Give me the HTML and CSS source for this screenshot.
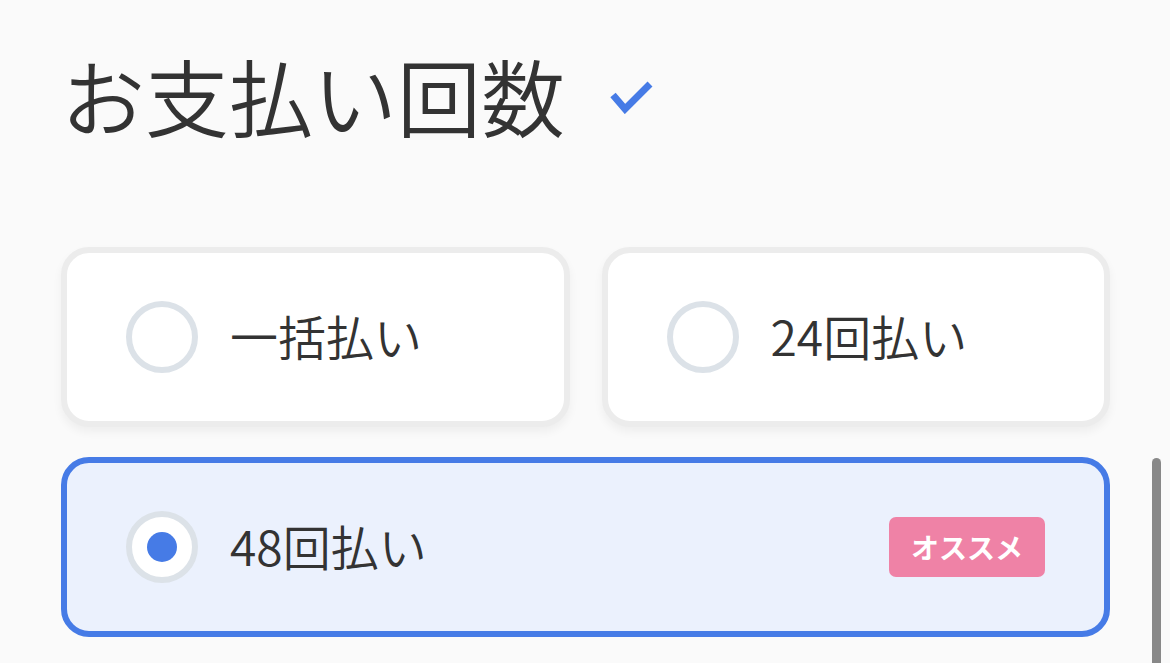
FILE: index.html
```html
<!DOCTYPE html>
<html lang="ja">
<head>
<meta charset="utf-8">
<link rel="stylesheet" href="styles.css">
</head>
<body>
<div class="page">
  <div class="title-row">
    <h1 class="title">お支払い回数</h1>
    <svg class="check" width="48" height="34" viewBox="0 0 48 34">
      <polyline points="4,11 16,25 41,0" fill="none" stroke="#467be6" stroke-width="7" stroke-linejoin="miter" stroke-miterlimit="10" transform="translate(0,4)"/>
    </svg>
  </div>
  <div class="options">
    <label class="card">
      <span class="radio"></span>
      <span class="label">一括払い</span>
    </label>
    <label class="card">
      <span class="radio"></span>
      <span class="label">24回払い</span>
    </label>
    <label class="card card-wide card-selected">
      <span class="radio radio-on"><span class="dot"></span></span>
      <span class="label">48回払い</span>
      <span class="badge">オススメ</span>
    </label>
  </div>
</div>
<div class="scrollbar"></div>
</body>
</html>
```

FILE: styles.css
```css
html, body {
  margin: 0;
  padding: 0;
  background: #fafafa;
  height: 100%;
  overflow: hidden;
}
body {
  font-family: "Noto Sans CJK JP", "Noto Sans", sans-serif;
  color: #333333;
}
.page {
  padding: 53px 60px 0 61px;
}
.title-row {
  display: flex;
  align-items: center;
  gap: 44px;
  height: 84px;
}
.title {
  margin: 0;
  font-size: 84px;
  line-height: 84px;
  font-weight: 350;
  color: #333333;
  letter-spacing: 0;
}
.check {
  display: block;
  margin-top: 4px;
}
.options {
  margin-top: 110px;
  display: grid;
  grid-template-columns: 1fr 1fr;
  column-gap: 32px;
  row-gap: 30px;
}
.card {
  box-sizing: border-box;
  height: 180px;
  display: flex;
  align-items: center;
  padding: 0 59px;
  background: #ffffff;
  border: 6px solid #ececec;
  border-radius: 28px;
  box-shadow: 0 5px 10px rgba(0, 0, 0, 0.05);
}
.card-wide {
  grid-column: 1 / 3;
}
.card-selected {
  background: #ebf1fd;
  border-color: #467be6;
  box-shadow: none;
}
.radio {
  box-sizing: border-box;
  flex: none;
  width: 72px;
  height: 72px;
  border: 6px solid #dce2e8;
  border-radius: 50%;
  background: #ffffff;
  display: flex;
  align-items: center;
  justify-content: center;
}
.dot {
  width: 30px;
  height: 30px;
  border-radius: 50%;
  background: #467be6;
}
.label {
  margin-left: 32px;
  margin-top: -4px;
  font-size: 48px;
  line-height: 1;
  font-weight: 350;
  color: #333333;
  flex: 1;
}
.badge {
  flex: none;
  box-sizing: border-box;
  width: 156px;
  height: 60px;
  background: #ef82a6;
  color: #ffffff;
  border-radius: 7px;
  font-size: 28px;
  font-weight: 700;
  display: flex;
  align-items: center;
  justify-content: center;
  letter-spacing: 0;
}
.scrollbar {
  position: fixed;
  right: 9px;
  top: 458px;
  width: 9px;
  height: 220px;
  border-radius: 5px;
  background: #888888;
}
```
